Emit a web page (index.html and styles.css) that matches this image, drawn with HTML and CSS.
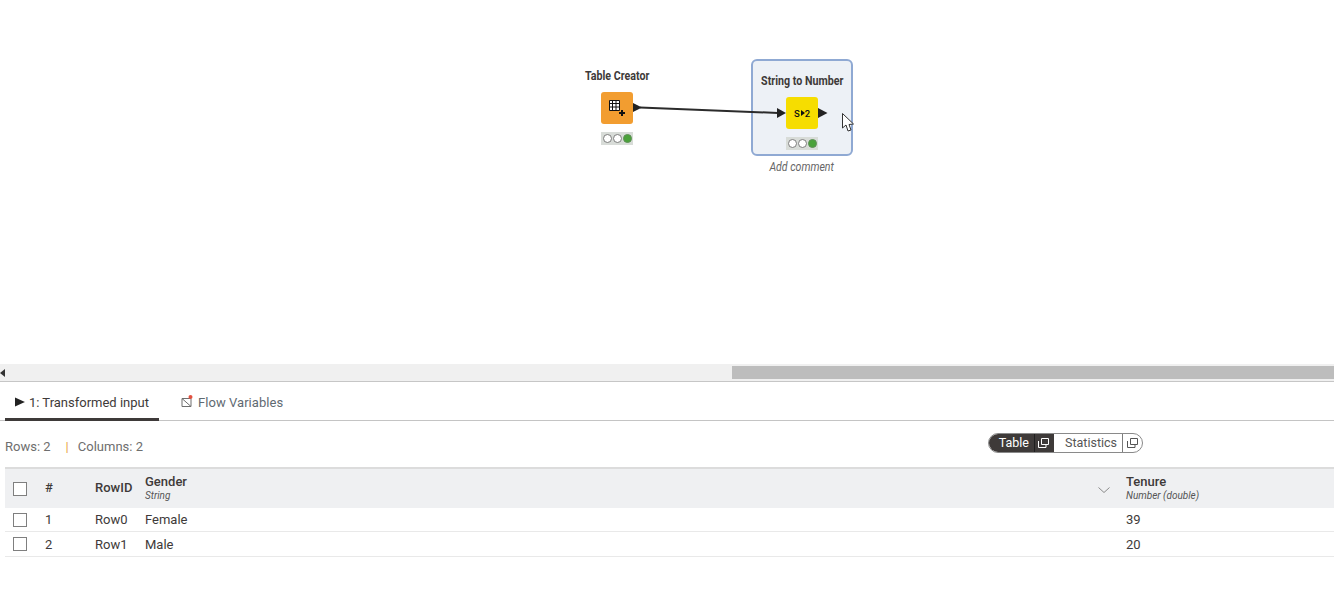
FILE: index.html
```html
<!DOCTYPE html>
<html lang="en">
<head>
<meta charset="utf-8">
<title>Workflow</title>
<link rel="stylesheet" href="styles.css">
</head>
<body>
<main class="page">
  <section class="canvas">
    <div class="selection"></div>
    <svg class="wires" width="1334" height="364" viewBox="0 0 1334 364">
      <path d="M640 107.500 L778 113" stroke="#2b2b2b" stroke-width="2" fill="none"/>
      <path d="M633 103 L642 107.500 L633 112 Z" fill="#222"/>
      <path d="M777 108 L786 113 L777 118 Z" fill="#222"/>
      <path d="M818 108 L827.500 113 L818 118 Z" fill="#222"/>
      <path d="M842.500 113.500 V128 L846 125 L848 131 L851 130 L849 124.500 L853.500 124 Z" fill="#fff" stroke="#333" stroke-width="1"/>
    </svg>

    <div class="node node-creator">
      <div class="node-title">Table Creator</div>
      <div class="node-box orange">
        <svg width="16" height="16" viewBox="0 0 16 16">
          <path d="M0.500 0.500H10.500V10.500H0.500ZM0.500 3.500H10.500M0.500 7H10.500M3.500 0.500V10.500M7 0.500V10.500" fill="#fff" stroke="#111" stroke-width="1"/>
          <path d="M10 13H16M13 10V16" stroke="#111" stroke-width="2"/>
        </svg>
      </div>
      <div class="lights"><i></i><i></i><i class="on"></i></div>
    </div>

    <div class="node node-number">
      <div class="node-title">String to Number</div>
      <div class="node-box yellow"><span>S</span><svg class="s2-arrow" width="4" height="6" viewBox="0 0 4 6"><path d="M0 0L4 3L0 6Z" fill="#111"/></svg><span>2</span></div>
      <div class="lights"><i></i><i></i><i class="on"></i></div>
      <div class="comment">Add comment</div>
    </div>
  </section>

  <div class="scrollbar">
    <svg class="scroll-arrow" width="6" height="8" viewBox="0 0 6 8"><path d="M5 0V8L0 4Z" fill="#333"/></svg>
    <div class="scroll-thumb"></div>
  </div>

  <nav class="tabs">
    <div class="tab active">
      <svg width="10" height="10" viewBox="0 0 10 10"><path d="M0 0.500L10 5L0 9.500Z" fill="#222"/></svg>
      <span>1: Transformed input</span>
    </div>
    <div class="tab">
      <svg class="flow-icon" width="13" height="13" viewBox="0 0 13 13">
        <path d="M2 3.500H11V11.500H2ZM2 3.500L11 11.500" fill="none" stroke="#6e6e6e" stroke-width="1"/>
        <circle cx="10.500" cy="2" r="2" fill="#e2503f"/>
      </svg>
      <span>Flow Variables</span>
    </div>
  </nav>

  <div class="toolbar">
    <div class="counts"><span>Rows: 2</span><span class="pipe">|</span><span>Columns: 2</span></div>
    <div class="switch">
      <div class="seg selected"><span class="seg-label">Table</span><span class="seg-icon"><svg width="11" height="10" viewBox="0 0 11 10"><path d="M3.500 0.500H10.500V6.500H3.500ZM0.500 3V9.500H8V7" fill="none" stroke="#fff" stroke-width="1"/></svg></span></div>
      <div class="seg"><span class="seg-label">Statistics</span><span class="seg-icon"><svg width="11" height="10" viewBox="0 0 11 10"><path d="M3.500 0.500H10.500V6.500H3.500ZM0.500 3V9.500H8V7" fill="none" stroke="#555" stroke-width="1"/></svg></span></div>
    </div>
  </div>

  <div class="table">
    <div class="row head">
      <div class="c-check"><span class="box"></span></div>
      <div class="c-num">#</div>
      <div class="c-id">RowID</div>
      <div class="c-gender">
        <div class="col-title">Gender</div>
        <div class="col-type">String</div>
        <svg class="chevron" width="12" height="6" viewBox="0 0 12 6"><path d="M0.500 0.500L6 5.500L11.500 0.500" fill="none" stroke="#8a8a8a" stroke-width="1"/></svg>
      </div>
      <div class="c-tenure">
        <div class="col-title">Tenure</div>
        <div class="col-type">Number (double)</div>
      </div>
    </div>
    <div class="row first">
      <div class="c-check"><span class="box"></span></div>
      <div class="c-num">1</div>
      <div class="c-id">Row0</div>
      <div class="c-gender">Female</div>
      <div class="c-tenure">39</div>
    </div>
    <div class="row">
      <div class="c-check"><span class="box"></span></div>
      <div class="c-num">2</div>
      <div class="c-id">Row1</div>
      <div class="c-gender">Male</div>
      <div class="c-tenure">20</div>
    </div>
  </div>
</main>
</body>
</html>
```

FILE: styles.css
```css
* { box-sizing: border-box; }
html, body { margin: 0; background: #fff; }
body { font-family: Roboto, "Liberation Sans", sans-serif; color: #3e3a39; overflow: hidden; }
.page { width: 1334px; height: 610px; display: flex; flex-direction: column; }

.canvas { position: relative; height: 364px; flex: none; }
.wires { position: absolute; left: 0; top: 0; z-index: 2; }
.selection { position: absolute; left: 751px; top: 59px; width: 102px; height: 97px; background: #edf1f6; border: 2px solid #8fa9d3; border-radius: 6px; }
.node { position: absolute; width: 120px; display: flex; flex-direction: column; align-items: center; }
.node-creator { left: 557px; top: 69px; }
.node-number { left: 742px; top: 74px; }
.node-title { height: 14px; line-height: 14px; font-weight: 700; font-size: 12px; color: #3e3a39; white-space: nowrap; transform: scaleX(.89); }
.node-box { width: 32px; height: 32px; margin-top: 9px; border-radius: 3px; display: flex; align-items: center; justify-content: center; }
.orange { background: #f29d30; }
.yellow { background: #f6dd00; font-size: 9.500px; font-weight: 500; color: #111; }
.s2-arrow { margin: 0 0 0 1px; }
.lights { width: 32px; height: 13px; margin-top: 8px; background: #d8dcd8; display: flex; align-items: center; justify-content: center; gap: 1px; }
.lights i { width: 9px; height: 9px; border-radius: 50%; background: #fff; border: 1px solid #7d7d7d; }
.lights i.on { background: #4aa23a; border-color: #5d8f55; }
.comment { margin-top: 10px; height: 14px; line-height: 14px; font-size: 12px; font-style: italic; color: #666; white-space: nowrap; transform: scaleX(.88); }

.scrollbar { height: 17px; flex: none; background: #f0f0f0; display: flex; align-items: center; justify-content: space-between; }
.scroll-thumb { width: 602px; height: 13px; background: #bdbdbd; }

.tabs { height: 40px; flex: none; border-top: 1px solid #c6c6c6; border-bottom: 1px solid #c4c4c4; display: flex; padding-left: 5px; font-size: 13px; }
.tab { display: flex; align-items: center; gap: 4px; height: 39px; padding: 2px 10px 0; color: #5f6a72; white-space: nowrap; }
.tab.active { width: 154px; color: #3e3a39; border-bottom: 3px solid #3e3a39; padding-top: 4px; gap: 4px; }
.tab.active + .tab { padding-left: 21px; gap: 5px; letter-spacing: .05px; }
.flow-icon { margin-top: -2px; }

.toolbar { height: 46px; flex: none; display: flex; justify-content: space-between; padding-left: 5px; padding-right: 191px; }
.counts { display: flex; font-size: 13px; color: #6e6e6e; margin-top: 18px; line-height: 16px; height: 16px; }
.pipe { color: #e8a24a; margin: 0 9px 0 15px; }
.switch { margin-top: 12px; height: 20px; display: flex; border: 1px solid #8a8a8a; border-radius: 10px; font-size: 12.500px; overflow: hidden; }
.seg { display: flex; align-items: center; color: #555; }
.seg.selected { background: #3e3a39; color: #fff; }
.seg-label { padding: 0 5px 0 11px; line-height: 18px; }
.seg-icon { display: flex; height: 18px; align-items: center; padding: 0 4px; border-left: 1px solid #7d7d7d; }
.seg.selected .seg-label { padding-left: 10px; }
.seg.selected .seg-icon { padding: 0 5px 0 3px; border-left-color: #1f1f1f; }

.table { margin-left: 5px; font-size: 13px; color: #3e3a39; }
.row { display: flex; align-items: center; height: 25px; border-bottom: 1px solid #e9e9e9; }
.row.first { height: 24px; }
.row.head { height: 41px; background: #eff0f2; border-top: 2px solid #dcdcdc; border-bottom: 0; }
.c-check { width: 40px; padding-left: 8px; display: flex; align-items: center; }
.box { width: 14px; height: 14px; background: #fff; border: 1px solid #7f7f7f; display: block; }
.c-num { width: 50px; }
.c-id { width: 50px; }
.c-gender { width: 981px; position: relative; }
.c-tenure { flex: 1; }
.head .c-num, .head .c-id, .head .c-gender, .head .c-tenure { margin-top: -2px; }
.head .c-num, .head .c-id { font-weight: 500; }
.col-title { font-weight: 500; line-height: 15px; }
.col-type { font-size: 10px; font-style: italic; line-height: 13px; color: #555; }
.chevron { position: absolute; right: 16px; top: 13px; }
```
